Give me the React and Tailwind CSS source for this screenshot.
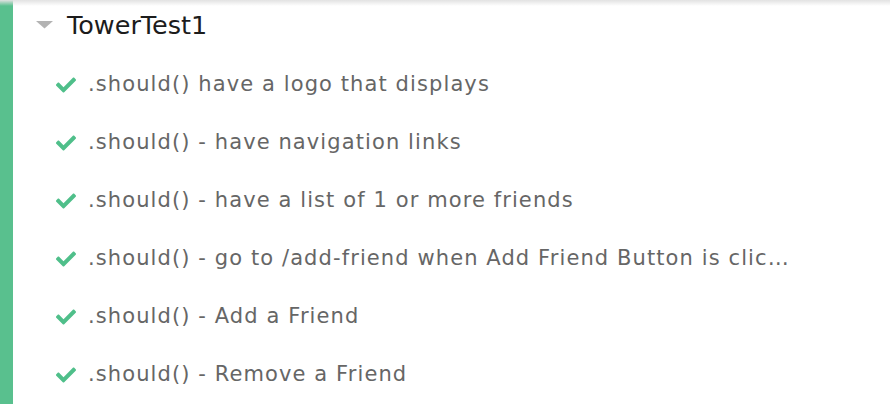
import { FaCheck } from "react-icons/fa";

const tests = [
  ".should() have a logo that displays",
  ".should() - have navigation links",
  ".should() - have a list of 1 or more friends",
  ".should() - go to /add-friend when Add Friend Button is clicked",
  ".should() - Add a Friend",
  ".should() - Remove a Friend",
];

export default function App() {
  return (
    <div className="relative flex h-[404px] w-[890px] overflow-hidden bg-white font-['DejaVu_Sans',sans-serif]">
      {/* top shadow from the header above */}
      <div className="pointer-events-none absolute inset-x-0 top-0 h-[6px] bg-gradient-to-b from-[#e2e2e2] to-transparent" />
      <div className="w-[13px] shrink-0 bg-[#59c08e]" />
      <div className="flex min-w-0 flex-1 flex-col">
        <div className="flex h-[50px] items-center pl-[23px]">
          <svg width="17" height="8" viewBox="0 0 17 8" className="mr-[14px]">
            <polygon points="0,0 17,0 8.5,7.5" fill="#b3b3b3" />
          </svg>
          <span className="text-[25.5px] text-[#1c1c1c]">TowerTest1</span>
        </div>
        <ul className="mt-[6px] flex w-[777px] flex-col">
          {tests.map((t) => (
            <li key={t} className="flex h-[58px] items-center pl-[43px]">
              <FaCheck className="mr-[12px] shrink-0 text-[20px] text-[#4fbf8a]" />
              <span className="truncate text-[21px] tracking-[1.1px] text-[#666666]">{t}</span>
            </li>
          ))}
        </ul>
      </div>
    </div>
  );
}
